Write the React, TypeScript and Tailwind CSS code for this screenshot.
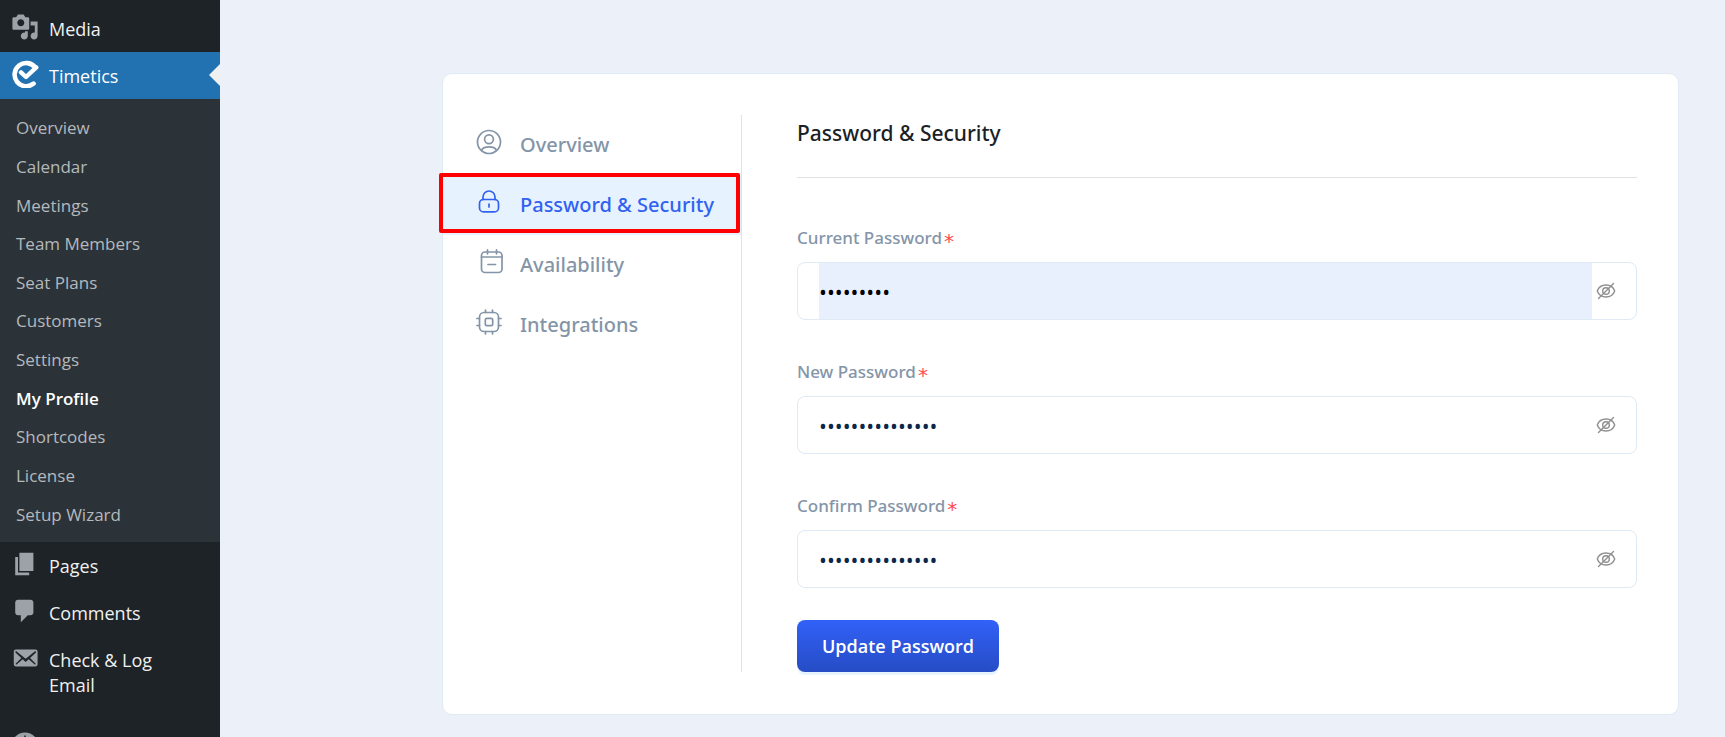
import { useState } from "react";
import type { ReactNode } from "react";

const submenu = [
  "Overview",
  "Calendar",
  "Meetings",
  "Team Members",
  "Seat Plans",
  "Customers",
  "Settings",
  "My Profile",
  "Shortcodes",
  "License",
  "Setup Wizard",
];

const menuPaths = {
  media:
    "M13 11V4c0-.55-.45-1-1-1h-1.67L9 1H5L3.67 3H2c-.55 0-1 .45-1 1v7c0 .55.45 1 1 1h10c.55 0 1-.45 1-1zM7 4.5c1.38 0 2.5 1.12 2.5 2.5S8.38 9.5 7 9.5 4.5 8.38 4.5 7 5.62 4.5 7 4.5zM14 6h5v10.5c0 1.38-1.12 2.5-2.5 2.5S14 17.88 14 16.5s1.12-2.5 2.5-2.5c.17 0 .34.02.5.05V9h-3V6zm-4 8.05V13h2v3.5c0 1.38-1.12 2.5-2.5 2.5S7 17.88 7 16.5 8.12 14 9.5 14c.17 0 .34.02.5.05z",
  pages: "M6 15V2h10v13H6zm-1 1h8v2H3V5h2v11z",
  comments:
    "M5 2h9c1.1 0 2 .9 2 2v7c0 1.1-.9 2-2 2h-2l-5 5v-5H5c-1.1 0-2-.9-2-2V4c0-1.1.9-2 2-2z",
  email:
    "M19 14.5v-9c0-.83-.67-1.5-1.5-1.5H3.49c-.83 0-1.5.67-1.5 1.5v9c0 .83.67 1.5 1.5 1.5H17.5c.83 0 1.5-.67 1.5-1.5zm-1.31-9.11c.33.33.15.67-.03.84L13.6 9.95l3.9 4.06c.12.14.2.36.06.51-.13.16-.43.15-.56.05l-4.37-3.73-2.14 1.95-2.13-1.95-4.37 3.73c-.13.1-.43.11-.56-.05-.14-.15-.06-.37.06-.51l3.9-4.06-4.06-3.72c-.18-.17-.36-.51-.03-.84s.67-.17.95.07l6.24 5.04 6.25-5.04c.28-.24.62-.4.95-.07z",
};

function MenuIcon({ d }: { d: string }) {
  return (
    <svg viewBox="0 0 20 20" className="h-7 w-7 fill-[#9ca2a7]" aria-hidden="true">
      <path d={d} />
    </svg>
  );
}

function TimeticsLogo() {
  return (
    <svg viewBox="0 0 28 28" className="h-7 w-7" fill="none" stroke="#fff" strokeLinecap="round" strokeLinejoin="round" aria-hidden="true">
      <path d="M24.4 7.6A11.6 11.6 0 1 0 22.6 23.6" strokeWidth="4.6" />
      <path d="M10 12.4l5 4.6L25.3 7.4" strokeWidth="4.4" />
    </svg>
  );
}

function GaugeIcon() {
  return (
    <svg viewBox="0 0 28 28" className="h-7 w-7" aria-hidden="true">
      <circle cx="14" cy="14" r="13.5" fill="#9ca2a7" />
      <path d="M14 3.5v4M5 9l3 2M23 9l-3 2M14 18l3-8" stroke="#1d2327" strokeWidth="1.5" />
    </svg>
  );
}

function MenuLink({ icon, label, active = false }: { icon: ReactNode; label: string; active?: boolean }) {
  return (
    <a
      href="#"
      className={`relative flex items-start pt-3 pb-[10px] text-lg leading-[25px] ${
        active ? "bg-[#2271b1] text-white" : "text-[#f0f0f1]"
      }`}
    >
      <span className="-mt-1 flex w-[49px] shrink-0 justify-center">{icon}</span>
      <span className="pr-8">{label}</span>
      {active && (
        <span className="absolute top-3 right-0 border-y-[11px] border-r-[11px] border-y-transparent border-r-[#f0f0f1]" />
      )}
    </a>
  );
}

const tabIcons: Record<string, ReactNode> = {
  Overview: (
    <>
      <circle cx="13" cy="13" r="11.5" />
      <circle cx="13" cy="10.3" r="4.4" />
      <path d="M5.6 21.4c.8-2.6 3-3.6 7.4-3.6s6.6 1 7.4 3.6" />
    </>
  ),
  "Password & Security": (
    <>
      <rect x="3.5" y="10.5" width="19" height="12.4" rx="4" />
      <path d="M7 10.5V8a6 6 0 0 1 12 0v2.5M13 15v3" />
    </>
  ),
  Availability: (
    <>
      <rect x="5.5" y="3" width="20.5" height="20.5" rx="3.5" />
      <path d="M5.5 8h20.500M11.5.8v4M20.5.8v4M12 15.5h7.5" />
    </>
  ),
  Integrations: (
    <>
      <rect x="3.5" y="3.5" width="19" height="19" rx="4.5" />
      <rect x="9.3" y="9.3" width="7.4" height="7.4" rx="1.5" />
      <path d="M9.5 3.5V1M16.5 3.5V1M9.5 25v-2.5M16.5 25v-2.5M3.5 9.500H1M3.5 16.5H1M25 9.5h-2.5M25 16.5h-2.5" />
    </>
  ),
};

function EyeOffIcon() {
  return (
    <svg viewBox="0 0 20 20" className="h-5 w-5" fill="none" stroke="#8f8f8f" strokeWidth="1.4" strokeLinecap="round" aria-hidden="true">
      <path d="M1.3 10C2.8 5.8 6 4 10 4s7.2 1.8 8.7 6c-1.5 4.2-4.7 6-8.7 6S2.8 14.2 1.3 10z" />
      <circle cx="10" cy="10" r="3.3" />
      <path d="M2.5 17.5l15-15" />
    </svg>
  );
}

function PasswordField({
  id,
  label,
  value,
  filled = false,
}: {
  id: string;
  label: string;
  value: string;
  filled?: boolean;
}) {
  const [text, setText] = useState(value);
  const [visible, setVisible] = useState(false);

  return (
    <div>
      <label htmlFor={id} className="flex items-center gap-0.5 font-['Noto_Sans',sans-serif] text-[17px] leading-6 font-medium text-[#8495a8]">
        {label}
        <span className="pt-1.5 font-['DejaVu_Sans',sans-serif] text-xl leading-[18px] font-normal text-[#ff4d4f]">*</span>
      </label>
      <div className="mt-3 flex h-[58px] rounded-lg border border-[#dfeaf5] pr-5 pl-[21px]">
        <input
          id={id}
          type={visible ? "text" : "password"}
          value={text}
          onChange={(e) => setText(e.target.value)}
          className={`h-full min-w-0 flex-1 pt-0.5 text-[21px] outline-none ${
            filled ? "bg-[#e8f0fe] text-black" : "text-[#0c274a]"
          }`}
        />
        <button type="button" aria-label="Toggle visibility" className="pl-1" onClick={() => setVisible(!visible)}>
          <EyeOffIcon />
        </button>
      </div>
    </div>
  );
}

export default function App() {
  const [tab, setTab] = useState("Password & Security");

  return (
    <div className="flex min-h-screen bg-[#ecf1f9] font-['Open_Sans','Noto_Sans',sans-serif]">
      {/* Admin menu */}
      <aside className="h-screen w-[220px] shrink-0 overflow-hidden bg-[#1d2327] pt-[5px]">
        <MenuLink icon={<MenuIcon d={menuPaths.media} />} label="Media" />
        <MenuLink icon={<TimeticsLogo />} label="Timetics" active />
        <ul className="grid h-[443px] auto-rows-fr bg-[#2c3338] pt-2.5 pb-2">
          {submenu.map((item) => (
            <li key={item} className="flex items-center">
              <a
                href="#"
                className={`pl-4 text-[17px] leading-6 ${
                  item === "My Profile" ? "font-semibold text-white" : "text-[#b4b9be]"
                }`}
              >
                {item}
              </a>
            </li>
          ))}
        </ul>
        <MenuLink icon={<MenuIcon d={menuPaths.pages} />} label="Pages" />
        <MenuLink icon={<MenuIcon d={menuPaths.comments} />} label="Comments" />
        <MenuLink icon={<MenuIcon d={menuPaths.email} />} label="Check & Log Email" />
        <div className="mt-4">
          <MenuLink icon={<GaugeIcon />} label="" />
        </div>
      </aside>

      {/* Profile card */}
      <main className="flex-1 pt-[73px] pr-[46px] pb-5 pl-[222px]">
        <div className="flex rounded-[10px] border border-[#dfeaf5] bg-white pt-[41px] pr-[41px] pb-[42px]">
          <nav className="relative w-[299px] shrink-0 border-r border-[#dfe1e5] font-['Noto_Sans',sans-serif]">
            {Object.keys(tabIcons).map((name) => (
              <button
                key={name}
                type="button"
                onClick={() => setTab(name)}
                className={`flex h-[60px] w-full items-center gap-[18px] pl-[33px] text-xl font-medium ${
                  tab === name ? "bg-[#e7f2ff] text-[#3161f1]" : "text-[#8495a8]"
                }`}
              >
                <svg viewBox="0 0 26 26" className="mb-1.5 h-[26px] w-[26px] overflow-visible" fill="none" stroke="currentColor" strokeWidth="1.7" strokeLinecap="round" aria-hidden="true">
                  {tabIcons[name]}
                </svg>
                {name}
              </button>
            ))}
            {/* highlight frame */}
            <div className="pointer-events-none absolute top-[58px] right-px -left-1 h-[60px] rounded-xs border-4 border-[#ff0000]" />
          </nav>

          <form className="ml-[55px] flex-1" onSubmit={(e) => e.preventDefault()}>
            <h1 className="border-b border-[#dfe1e5] pt-[3px] pb-[29px] font-['Noto_Sans',sans-serif] text-[21px] leading-[30px] font-medium text-[#1c1f26]">
              Password &amp; Security
            </h1>
            <div className="mt-12 space-y-10">
              <PasswordField id="current" label="Current Password" value="timetics1" filled />
              <PasswordField id="new" label="New Password" value="timetics-secret" />
              <PasswordField id="confirm" label="Confirm Password" value="timetics-secret" />
            </div>
            <button
              type="submit"
              className="mt-8 h-[52px] rounded-lg bg-linear-to-b from-[#3161f8] to-[#264cc5] px-[25px] text-lg font-semibold text-white shadow-[0_3px_0_#e6f4ff]"
            >
              Update Password
            </button>
          </form>
        </div>
      </main>
    </div>
  );
}
